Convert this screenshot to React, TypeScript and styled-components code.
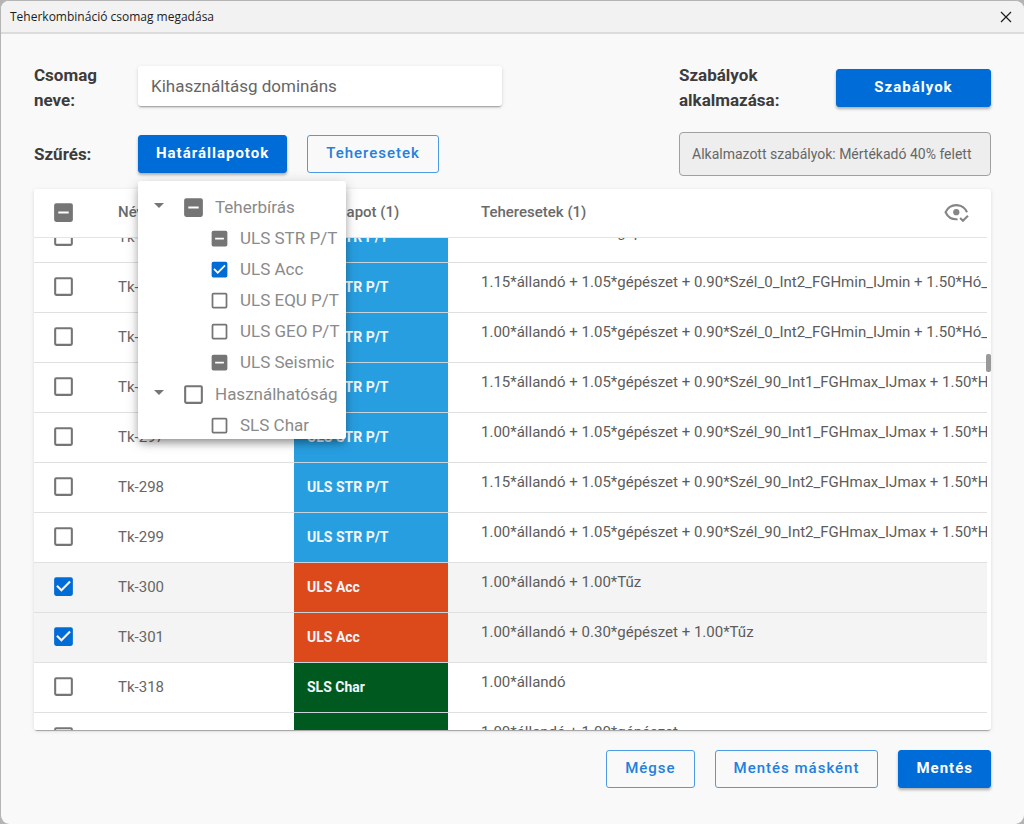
import React, { useLayoutEffect, useRef, useState } from "react";
import styled, { createGlobalStyle } from "styled-components";

const GlobalStyle = createGlobalStyle`
  *, *::before, *::after { box-sizing: border-box; }
  body {
    margin: 0;
    background: #b4b4b4;
    color: #666;
    font-family: Roboto, "Liberation Sans", sans-serif;
    font-size: 15px;
  }
`;

const PRIMARY = "#006cd8";

const Dialog = styled.main`
  display: flex;
  flex-direction: column;
  height: 100vh;
  min-height: 480px;
  border: solid #b4b4b4;
  border-width: 1px 0 0 1px;
  border-radius: 9px;
  background: #f9f9f9;
  overflow: hidden;
`;

const TitleBar = styled.header`
  display: flex;
  align-items: center;
  justify-content: space-between;
  flex: none;
  height: 33px;
  padding: 0 12px 0 9px;
  border-bottom: 2px solid #dcdcdc;
  background: #f2f2f2;
`;

const Title = styled.h1`
  margin: 0;
  color: #1c1c1c;
  font: 400 12px "Open Sans", "Noto Sans", sans-serif;
`;

const CloseButton = styled.button`
  display: flex;
  padding: 0;
  border: 0;
  background: none;
  cursor: pointer;
`;

const Content = styled.div`
  display: flex;
  flex: 1;
  flex-direction: column;
  min-height: 0;
  padding: 29px 33px 36px;
`;

const Toolbar = styled.section`
  display: flex;
  justify-content: space-between;
  gap: 24px;
  margin-bottom: 13px;
`;

const NameAndFilter = styled.div`
  display: grid;
  grid-template-columns: 104px minmax(0, 364px);
  grid-template-rows: 50px 44px;
  row-gap: 19px;
  align-items: center;
  flex: 0 1 468px;
`;

const Rules = styled.div`
  display: grid;
  grid-template-columns: 1fr 155px;
  grid-template-rows: 50px 44px;
  row-gap: 19px;
  align-items: center;
  flex: 0 0 312px;
`;

const FieldLabel = styled.label`
  max-width: 110px;
  color: #3c3c3c;
  font-size: 17px;
  font-weight: 700;
  line-height: 25px;
`;

const TextInput = styled.input`
  width: 100%;
  height: 40px;
  margin-bottom: 4px;
  padding: 0 13px;
  border: 0;
  border-radius: 3px;
  background: #fff;
  box-shadow: 0 2px 2px -1px rgba(0, 0, 0, 0.35), 0 1px 4px rgba(0, 0, 0, 0.12);
  color: #666;
  font: 400 17px Roboto, sans-serif;
`;

const Button = styled.button<{ $filled?: boolean }>`
  height: 38px;
  padding: 0 ${(p) => (p.$filled ? 17 : 18)}px 2px;
  border: 1px solid ${PRIMARY};
  border-color: ${(p) => (p.$filled ? PRIMARY : "#4d9ae5")};
  border-radius: 3px;
  background: ${(p) => (p.$filled ? PRIMARY : "transparent")};
  box-shadow: ${(p) => (p.$filled ? "0 2px 3px rgba(0, 0, 0, 0.3)" : "none")};
  color: ${(p) => (p.$filled ? "#fff" : "#2380dd")};
  font: ${(p) => (p.$filled ? 700 : 500)} 15px Roboto, sans-serif;
  letter-spacing: 1px;
  white-space: nowrap;
  cursor: pointer;
`;

const ButtonRow = styled.div<{ $end?: boolean }>`
  display: flex;
  flex: none;
  justify-content: ${(p) => (p.$end ? "flex-end" : "flex-start")};
  gap: 20px;
  margin-top: ${(p) => (p.$end ? "20px" : "0")};
`;

const MenuAnchor = styled.div`
  position: relative;
`;

const Menu = styled.ul`
  position: absolute;
  z-index: 5;
  top: calc(100% + 8px);
  left: 0;
  width: 208px;
  height: 258px;
  margin: 0;
  padding: 10px 0 0;
  border-radius: 3px;
  background: #fff;
  box-shadow: 0 5px 8px -2px rgba(0, 0, 0, 0.35), 0 3px 14px rgba(0, 0, 0, 0.2);
  list-style: none;
  overflow-y: auto;
  scrollbar-width: none;
`;

const SubMenu = styled.ul`
  margin: 0;
  padding: 0;
  list-style: none;
`;

const MenuLine = styled.div<{ $child?: boolean }>`
  display: flex;
  align-items: center;
  height: ${(p) => (p.$child ? "31px" : "32px")};
  padding-left: ${(p) => (p.$child ? "71px" : "9px")};
  gap: 10px;
`;

const MenuLabel = styled.label<{ $child?: boolean }>`
  display: flex;
  align-items: center;
  gap: ${(p) => (p.$child ? "10px" : "9px")};
  color: #8a8a8a;
  font-size: 17px;
  line-height: 31px;
  white-space: nowrap;
`;

const Expander = styled.button`
  display: flex;
  width: 24px;
  padding: 0;
  border: 0;
  background: none;
  cursor: pointer;
`;

const AppliedRules = styled.output`
  grid-column: 1 / -1;
  height: 44px;
  padding: 0 12px;
  border: 1px solid #a0a0a0;
  border-radius: 4px;
  background: #eee;
  color: #666;
  font-size: 14px;
  line-height: 42px;
  white-space: nowrap;
`;

const Card = styled.section`
  position: relative;
  flex: 1;
  min-height: 0;
  border-radius: 3px;
  background: #fff;
  box-shadow: 0 2px 1px -1px rgba(0, 0, 0, 0.3), 0 1px 4px rgba(0, 0, 0, 0.12);
`;

const Scroller = styled.div`
  height: 100%;
  padding-right: 4px;
  border-radius: 3px;
  overflow-y: auto;
  scrollbar-width: none;
`;

const ScrollThumb = styled.div`
  position: absolute;
  top: 165px;
  right: 0;
  width: 5px;
  height: 18px;
  border-radius: 2px;
  background: #999;
`;

const Table = styled.table`
  width: 100%;
  border-collapse: separate;
  border-spacing: 0;
  table-layout: fixed;
`;

const HeadCell = styled.th<{ $width?: number; $indent?: number }>`
  position: sticky;
  z-index: 1;
  top: 0;
  width: ${(p) => (p.$width ? `${p.$width}px` : "auto")};
  height: 49px;
  padding: 0 0 2px ${(p) => p.$indent ?? 13}px;
  border-bottom: 1px solid #e4e4e4;
  background: #fff;
  color: #6a6a6a;
  font-size: 15px;
  font-weight: 500;
  text-align: left;
  white-space: nowrap;
`;

const HeadContent = styled.div`
  display: flex;
  align-items: center;
  justify-content: space-between;
  padding-right: 18px;
`;

const IconButton = styled.button`
  display: flex;
  padding: 0;
  border: 0;
  background: none;
  color: #858585;
  cursor: pointer;
`;

const Row = styled.tr<{ $selected: boolean }>`
  background: ${(p) => (p.$selected ? "#f4f4f4" : "#fff")};
`;

const Cell = styled.td`
  height: 50px;
  padding: 0 0 2px 13px;
  border-bottom: 1px solid #e0e0e0;
  color: #666;
  white-space: nowrap;
`;

const StateCell = styled(Cell)<{ $color: string }>`
  border-bottom-color: #c8d4dc;
  background: ${(p) => p.$color};
  background-clip: padding-box;
  color: #f2f6fa;
  font-size: 14px;
  font-weight: 700;
`;

const FormulaCell = styled(Cell)`
  padding: 0 0 12px 33px;
`;

const Formula = styled.div`
  overflow: hidden;
  color: #5c5c5c;
`;

const CheckBox = styled.span<{ $size: number }>`
  display: grid;
  width: ${(p) => p.$size}px;
  height: ${(p) => p.$size}px;

  > * {
    grid-area: 1 / 1;
    width: 100%;
    height: 100%;
    margin: 0;
  }
  > input {
    appearance: none;
    cursor: pointer;
  }
  > svg {
    pointer-events: none;
  }
`;

const CheckSlot = styled.div`
  display: flex;
  align-items: center;
  padding-left: 4px;
`;

type Mark = "off" | "on" | "mixed";

const markPaths: Record<Mark, string> = {
  off: "M19 3H5a2 2 0 0 0-2 2v14a2 2 0 0 0 2 2h14a2 2 0 0 0 2-2V5a2 2 0 0 0-2-2zm0 2v14H5V5h14z",
  on: "M10 17l-5-5 1.41-1.42L10 14.17l7.59-7.59L19 8m0-5H5a2 2 0 0 0-2 2v14a2 2 0 0 0 2 2h14a2 2 0 0 0 2-2V5a2 2 0 0 0-2-2z",
  mixed: "M17 13H7v-2h10m2-8H5a2 2 0 0 0-2 2v14a2 2 0 0 0 2 2h14a2 2 0 0 0 2-2V5a2 2 0 0 0-2-2z",
};

type CheckProps = { initial: Mark; size?: number; label?: string; onToggle?: (on: boolean) => void };

function Check({ initial, size = 25, label, onToggle }: CheckProps) {
  const [mark, setMark] = useState<Mark>(initial);
  const ref = useRef<HTMLInputElement>(null);
  useLayoutEffect(() => {
    if (ref.current) ref.current.indeterminate = mark === "mixed";
  }, [mark]);
  return (
    <CheckBox $size={size}>
      <input
        ref={ref}
        type="checkbox"
        aria-label={label}
        checked={mark === "on"}
        onChange={(e) => {
          setMark(e.target.checked ? "on" : "off");
          onToggle?.(e.target.checked);
        }}
      />
      <svg viewBox="0 0 24 24" fill={mark === "on" ? PRIMARY : "#757575"} aria-hidden="true">
        <path d={markPaths[mark]} />
      </svg>
    </CheckBox>
  );
}

const tree: { name: string; mark: Mark; children: { name: string; mark: Mark }[] }[] = [
  {
    name: "Teherbírás",
    mark: "mixed",
    children: [
      { name: "ULS STR P/T", mark: "mixed" },
      { name: "ULS Acc", mark: "on" },
      { name: "ULS EQU P/T", mark: "off" },
      { name: "ULS GEO P/T", mark: "off" },
      { name: "ULS Seismic", mark: "mixed" },
    ],
  },
  { name: "Használhatóság", mark: "off", children: [{ name: "SLS Char", mark: "off" }] },
];

const stateColors: Record<string, string> = {
  "ULS STR P/T": "#279ee0",
  "ULS Acc": "#dc491b",
  "SLS Char": "#005a20",
};

const combinations = [
  { id: "Tk-293", state: "ULS STR P/T", formula: "1.00*állandó + 1.05*gépészet" },
  { id: "Tk-294", state: "ULS STR P/T", formula: "1.15*állandó + 1.05*gépészet + 0.90*Szél_0_Int2_FGHmin_IJmin + 1.50*Hó_" },
  { id: "Tk-295", state: "ULS STR P/T", formula: "1.00*állandó + 1.05*gépészet + 0.90*Szél_0_Int2_FGHmin_IJmin + 1.50*Hó_" },
  { id: "Tk-296", state: "ULS STR P/T", formula: "1.15*állandó + 1.05*gépészet + 0.90*Szél_90_Int1_FGHmax_IJmax + 1.50*H" },
  { id: "Tk-297", state: "ULS STR P/T", formula: "1.00*állandó + 1.05*gépészet + 0.90*Szél_90_Int1_FGHmax_IJmax + 1.50*H" },
  { id: "Tk-298", state: "ULS STR P/T", formula: "1.15*állandó + 1.05*gépészet + 0.90*Szél_90_Int2_FGHmax_IJmax + 1.50*H" },
  { id: "Tk-299", state: "ULS STR P/T", formula: "1.00*állandó + 1.05*gépészet + 0.90*Szél_90_Int2_FGHmax_IJmax + 1.50*H" },
  { id: "Tk-300", state: "ULS Acc", formula: "1.00*állandó + 1.00*Tűz" },
  { id: "Tk-301", state: "ULS Acc", formula: "1.00*állandó + 0.30*gépészet + 1.00*Tűz" },
  { id: "Tk-318", state: "SLS Char", formula: "1.00*állandó" },
  { id: "Tk-319", state: "SLS Char", formula: "1.00*állandó + 1.00*gépészet" },
];

function LimitStateMenu() {
  return (
    <Menu>
      {tree.map((group) => (
        <li key={group.name}>
          <MenuLine>
            <Expander aria-label={`${group.name} összecsukása`}>
              <svg width="24" height="24" viewBox="0 0 24 24" fill="#757575">
                <path d="M7 8l5 5 5-5z" />
              </svg>
            </Expander>
            <MenuLabel>
              <Check initial={group.mark} />
              {group.name}
            </MenuLabel>
          </MenuLine>
          <SubMenu>
            {group.children.map((item) => (
              <li key={item.name}>
                <MenuLine $child>
                  <MenuLabel $child>
                    <Check initial={item.mark} size={21} />
                    {item.name}
                  </MenuLabel>
                </MenuLine>
              </li>
            ))}
          </SubMenu>
        </li>
      ))}
    </Menu>
  );
}

function CombinationTable() {
  const scroller = useRef<HTMLDivElement>(null);
  const [selected, setSelected] = useState<string[]>(["Tk-300", "Tk-301"]);

  useLayoutEffect(() => {
    if (scroller.current) scroller.current.scrollTop = 25;
  }, []);

  const toggle = (id: string, on: boolean) =>
    setSelected((ids) => (on ? [...ids, id] : ids.filter((other) => other !== id)));

  return (
    <Card>
      <Scroller ref={scroller}>
        <Table>
          <thead>
            <tr>
              <HeadCell $width={71}>
                <CheckSlot>
                  <Check initial="mixed" label="Összes kijelölése" />
                </CheckSlot>
              </HeadCell>
              <HeadCell $width={189}>Név</HeadCell>
              <HeadCell $width={154} $indent={0}>
                Határállapot (1)
              </HeadCell>
              <HeadCell $indent={33}>
                <HeadContent>
                  Teheresetek (1)
                  <IconButton aria-label="Megjelenítés">
                    <svg width="25" height="25" viewBox="0 0 24 24" fill="none" stroke="currentColor" strokeWidth="2">
                      <path d="M13 18.4c-.4.1-.7.1-1.1.1C7.5 18.5 3.500 16 1.500 11.700 3.500 7.400 7.500 4.900 11.800 4.900s8.300 2.500 10.300 6.800" />
                      <circle cx="11.8" cy="11.700" r="3" fill="currentColor" stroke="none" />
                      <path d="M15.500 17.200l2.700 2.700 4.800-4.800" />
                    </svg>
                  </IconButton>
                </HeadContent>
              </HeadCell>
            </tr>
          </thead>
          <tbody>
            {combinations.map(({ id, state, formula }) => (
              <Row key={id} $selected={selected.includes(id)}>
                <Cell>
                  <CheckSlot>
                    <Check
                      initial={selected.includes(id) ? "on" : "off"}
                      label={id}
                      onToggle={(on) => toggle(id, on)}
                    />
                  </CheckSlot>
                </Cell>
                <Cell>{id}</Cell>
                <StateCell $color={stateColors[state]}>{state}</StateCell>
                <FormulaCell>
                  <Formula>{formula}</Formula>
                </FormulaCell>
              </Row>
            ))}
          </tbody>
        </Table>
      </Scroller>
      <ScrollThumb />
    </Card>
  );
}

export default function App() {
  return (
    <>
      <GlobalStyle />
      <Dialog>
        <TitleBar>
          <Title>Teherkombináció csomag megadása</Title>
          <CloseButton aria-label="Bezárás">
            <svg width="12" height="12" viewBox="0 0 12 12" stroke="#1c1c1c" strokeWidth="1.2">
              <path d="M1 1l10 10M11 1L1 11" />
            </svg>
          </CloseButton>
        </TitleBar>
        <Content>
          <Toolbar>
            <NameAndFilter>
              <FieldLabel htmlFor="package-name">
                Csomag
                <br />
                neve:
              </FieldLabel>
              <TextInput id="package-name" defaultValue="Kihasználtásg domináns" />
              <FieldLabel as="span">Szűrés:</FieldLabel>
              <ButtonRow>
                <MenuAnchor>
                  <Button $filled aria-expanded="true">
                    Határállapotok
                  </Button>
                  <LimitStateMenu />
                </MenuAnchor>
                <Button>Teheresetek</Button>
              </ButtonRow>
            </NameAndFilter>
            <Rules>
              <FieldLabel htmlFor="rules">Szabályok alkalmazása:</FieldLabel>
              <Button id="rules" $filled>
                Szabályok
              </Button>
              <AppliedRules>Alkalmazott szabályok: Mértékadó 40% felett</AppliedRules>
            </Rules>
          </Toolbar>
          <CombinationTable />
          <ButtonRow $end>
            <Button>Mégse</Button>
            <Button>Mentés másként</Button>
            <Button $filled>Mentés</Button>
          </ButtonRow>
        </Content>
      </Dialog>
    </>
  );
}
